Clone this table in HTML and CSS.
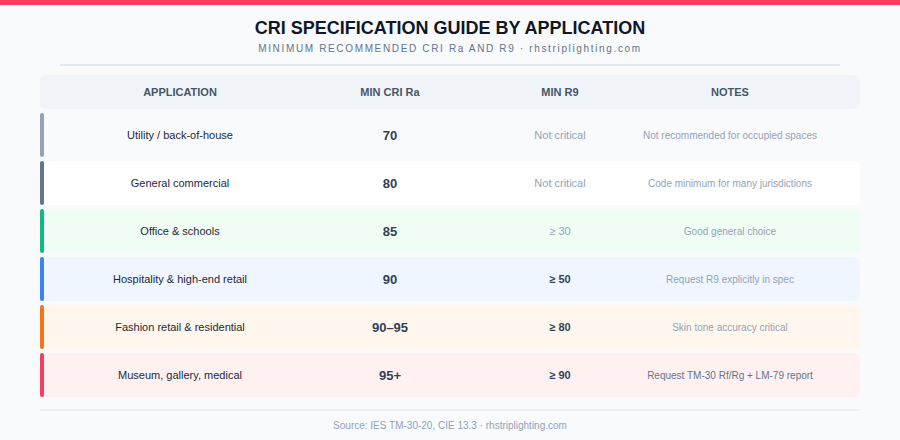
FILE: index.html
```html
<!DOCTYPE html>
<html lang="en">
<head>
<meta charset="utf-8">
<title>CRI Specification Guide</title>
<link rel="stylesheet" href="styles.css">
</head>
<body>
<div class="topbar"></div>
<main class="page">
  <h1 class="title">CRI SPECIFICATION GUIDE BY APPLICATION</h1>
  <p class="subtitle">MINIMUM RECOMMENDED CRI Ra AND R9 · rhstriplighting.com</p>
  <div class="divider"></div>
  <div class="thead">
    <span>APPLICATION</span>
    <span>MIN CRI Ra</span>
    <span>MIN R9</span>
    <span>NOTES</span>
  </div>
  <div class="rows">
    <div class="row r-utility">
      <span class="bar"></span>
      <span class="app">Utility / back-of-house</span>
      <span class="ra">70</span>
      <span class="r9 muted">Not critical</span>
      <span class="note">Not recommended for occupied spaces</span>
    </div>
    <div class="row r-general">
      <span class="bar"></span>
      <span class="app">General commercial</span>
      <span class="ra">80</span>
      <span class="r9 muted">Not critical</span>
      <span class="note">Code minimum for many jurisdictions</span>
    </div>
    <div class="row r-office">
      <span class="bar"></span>
      <span class="app">Office &amp; schools</span>
      <span class="ra">85</span>
      <span class="r9 muted">≥ 30</span>
      <span class="note">Good general choice</span>
    </div>
    <div class="row r-hosp">
      <span class="bar"></span>
      <span class="app">Hospitality &amp; high-end retail</span>
      <span class="ra">90</span>
      <span class="r9 strong">≥ 50</span>
      <span class="note">Request R9 explicitly in spec</span>
    </div>
    <div class="row r-fashion">
      <span class="bar"></span>
      <span class="app">Fashion retail &amp; residential</span>
      <span class="ra">90–95</span>
      <span class="r9 strong">≥ 80</span>
      <span class="note">Skin tone accuracy critical</span>
    </div>
    <div class="row r-museum">
      <span class="bar"></span>
      <span class="app">Museum, gallery, medical</span>
      <span class="ra">95+</span>
      <span class="r9 strong">≥ 90</span>
      <span class="note dark">Request TM-30 Rf/Rg + LM-79 report</span>
    </div>
  </div>
  <div class="footline"></div>
  <p class="source">Source: IES TM-30-20, CIE 13.3 · rhstriplighting.com</p>
</main>
</body>
</html>
```
FILE: styles.css
```css
* { box-sizing: border-box; }
html, body {
  margin: 0;
  padding: 0;
  background: #f8fafc;
  font-family: "Liberation Sans", Arial, sans-serif;
  width: 900px;
  height: 440px;
  overflow: hidden;
}
.topbar {
  height: 5px;
  background: #f43f5e;
}
.page {
  padding: 13px 40px 0;
}
.title {
  margin: 0;
  text-align: center;
  font-size: 18px;
  line-height: 20px;
  font-weight: 700;
  color: #0f172a;
}
.subtitle {
  margin: 4px 0 0;
  text-align: center;
  font-size: 10px;
  line-height: 14px;
  letter-spacing: 1.65px;
  color: #64748b;
}
.divider {
  height: 2px;
  margin: 8px 20px 0;
  background: #e2e8f0;
}
.thead, .row {
  display: grid;
  grid-template-columns: 4px 272px 148px 192px 148px;
  align-items: center;
  justify-items: center;
}
.thead {
  margin-top: 9px;
  height: 34px;
  background: #f1f5f9;
  border-radius: 6px;
  font-size: 11px;
  font-weight: 700;
  color: #475569;
}
.thead span { white-space: nowrap; }
.thead span:first-child { grid-column: 2; }
.rows {
  margin-top: 4px;
  display: flex;
  flex-direction: column;
  gap: 4px;
}
.row {
  height: 44px;
  border-radius: 0 6px 6px 0;
}
.row > span { white-space: nowrap; }
.bar {
  align-self: stretch;
  justify-self: stretch;
  border-radius: 2px;
}
.app {
  font-size: 11px;
  color: #1e293b;
}
.ra {
  font-size: 13px;
  font-weight: 700;
  color: #334155;
}
.r9 { font-size: 11px; }
.r9.muted { color: #94a3b8; }
.r9.strong { font-weight: 700; color: #334155; }
.note {
  font-size: 10px;
  color: #94a3b8;
}
.note.dark { color: #64748b; }
.r-utility { background: #f8fafc; }
.r-utility .bar { background: #94a3b8; }
.r-general { background: #ffffff; }
.r-general .bar { background: #64748b; }
.r-office { background: #f0fdf4; }
.r-office .bar { background: #10b981; }
.r-hosp { background: #eff6ff; }
.r-hosp .bar { background: #3b82f6; }
.r-fashion { background: #fff7ed; }
.r-fashion .bar { background: #f97316; }
.r-museum { background: #fff1f2; }
.r-museum .bar { background: #f43f5e; }
.footline {
  margin-top: 12px;
  height: 2px;
  background: #edf1f6;
}
.source {
  margin: 9px 0 0;
  text-align: center;
  font-size: 10px;
  line-height: 12px;
  color: #94a3b8;
}
```
